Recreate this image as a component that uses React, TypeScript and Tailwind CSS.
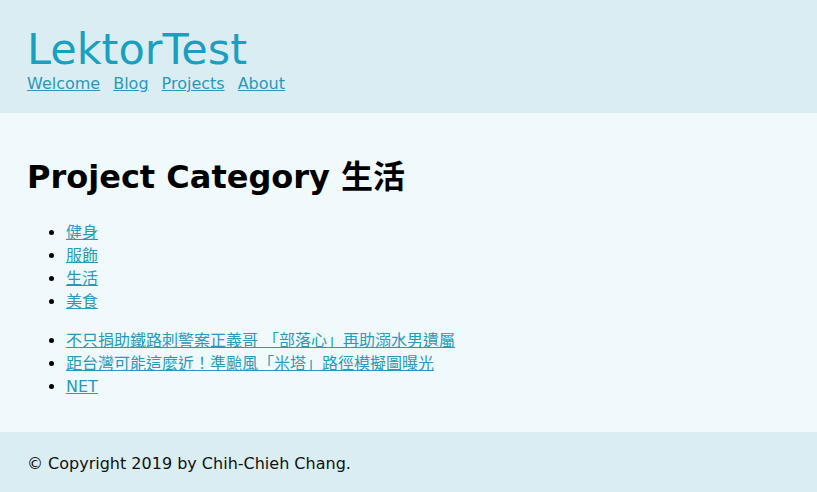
import React from "react";

const font = { fontFamily: '"DejaVu Sans", Verdana, "Noto Sans CJK TC", sans-serif' };

export default function App() {
  const cats = ["健身", "服飾", "生活", "美食"];
  const posts = [
    "不只捐助鐵路刺警案正義哥 「部落心」再助溺水男遺屬",
    "距台灣可能這麼近！準颱風「米塔」路徑模擬圖曝光",
    "NET",
  ];
  return (
    <div className="w-full min-h-[492px] bg-[#f0fafd] text-black" style={font}>
      <header className="bg-[#daedf3] px-[27px] pt-[24px] pb-[19px]">
        <h1 className="text-[43px] leading-[50px] text-[#1a9fc0] font-normal">LektorTest</h1>
        <nav className="flex gap-[13px] text-[16px] leading-[20px]">
          {["Welcome", "Blog", "Projects", "About"].map((l) => (
            <a key={l} href="#" className="text-[#2a98b8] underline">
              {l}
            </a>
          ))}
        </nav>
      </header>
      <main className="px-[27px] pt-[44px] pb-[34px]">
        <h2 className="text-[32px] leading-[40px] font-bold mb-[24px]">Project Category 生活</h2>
        <ul className="list-disc pl-[39px] text-[16px] leading-[23px] mb-[16px]">
          {cats.map((c) => (
            <li key={c}>
              <a href="#" className="text-[#2a98b8] underline">
                {c}
              </a>
            </li>
          ))}
        </ul>
        <ul className="list-disc pl-[39px] text-[16px] leading-[23px]">
          {posts.map((c) => (
            <li key={c}>
              <a href="#" className="text-[#2a98b8] underline">
                {c}
              </a>
            </li>
          ))}
        </ul>
      </main>
      <footer className="bg-[#daedf3] px-[27px] pt-[22px] pb-[18px] text-[16px] leading-[20px] text-[#111]">
        © Copyright 2019 by Chih-Chieh Chang.
      </footer>
    </div>
  );
}
